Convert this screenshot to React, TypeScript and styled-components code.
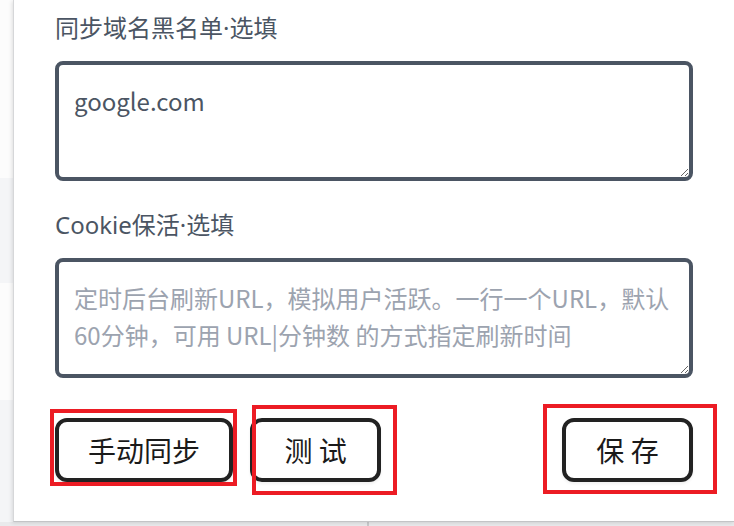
import React from 'react';
import styled, { createGlobalStyle } from 'styled-components';

const GlobalStyle = createGlobalStyle`
  html, body {
    margin: 0;
    padding: 0;
    background: #f5f6f8;
    overflow: hidden;
  }
  body {
    font-family: "Noto Sans", "Noto Sans CJK SC", sans-serif;
  }
`;

const Page = styled.div`
  width: 734px;
  height: 526px;
  display: flex;
  flex-direction: column;
  overflow: hidden;
`;

const Main = styled.div`
  display: flex;
  height: 522px;
`;

const SideStrip = styled.div`
  width: 13px;
  display: flex;
  flex-direction: column;
`;

const StripRow = styled.div<{ $h: number; $shade?: boolean }>`
  height: ${p => p.$h}px;
  flex-shrink: 0;
  background: ${p => (p.$shade ? '#f4f5f7' : '#fcfcfc')};
  &:last-child {
    flex: 1;
  }
`;

const Panel = styled.section`
  flex: 1;
  background: #ffffff;
  border-left: 1px solid #d6d7d9;
  border-bottom: 1px solid #c3c4c6;
  box-shadow: -1px 1px 4px rgba(0, 0, 0, 0.12);
  padding: 10px 41px 0 41px;
  display: flex;
  flex-direction: column;
  position: relative;
  z-index: 1;
`;

const Field = styled.div`
  display: flex;
  flex-direction: column;
  & + & {
    margin-top: 26px;
  }
`;

const Label = styled.label`
  font-size: 24px;
  line-height: 36px;
  color: #4b5563;
  margin-bottom: 15px;
`;

const TextArea = styled.textarea`
  box-sizing: border-box;
  width: 100%;
  height: 120px;
  border: 4px solid #4b5563;
  border-radius: 8px;
  padding: 17px 15px;
  font-family: "Noto Sans CJK SC", "Noto Sans", sans-serif;
  font-size: 24px;
  line-height: 37px;
  color: #4b5563;
  background: #ffffff;
  outline: none;

  &::placeholder {
    color: #9ca3af;
  }
`;

const ButtonRow = styled.div`
  display: flex;
  align-items: center;
  gap: 17px;
  margin-top: 40px;
`;

const Slot = styled.div<{ $push?: boolean }>`
  position: relative;
  margin-left: ${p => (p.$push ? 'auto' : '0')};
`;

const Button = styled.button`
  box-sizing: border-box;
  height: 64px;
  min-width: 131px;
  padding: 0 29px;
  border: 4px solid #222222;
  border-radius: 12px;
  background: #ffffff;
  color: #1a1a1a;
  font-family: "Noto Sans CJK SC", sans-serif;
  font-size: 28px;
  white-space: pre;
  box-shadow: 0 2px 3px rgba(0, 0, 0, 0.06);
  cursor: pointer;
`;

const Marker = styled.span<{ $t: number; $r: number; $b: number; $l: number }>`
  position: absolute;
  top: ${p => p.$t}px;
  right: ${p => p.$r}px;
  bottom: ${p => p.$b}px;
  left: ${p => p.$l}px;
  border: 4px solid #ec1c24;
  pointer-events: none;
`;

const BottomStrip = styled.div`
  flex: 1;
  display: flex;
  background: #e9eaec;
`;

const BottomCell = styled.div<{ $w?: number }>`
  width: ${p => (p.$w ? `${p.$w}px` : 'auto')};
  flex: ${p => (p.$w ? '0 0 auto' : '1')};
  border-right: ${p => (p.$w ? '2px solid #c9cacc' : 'none')};
`;

export default function App() {
  return (
    <Page>
      <GlobalStyle />
      <Main>
        <SideStrip>
          <StripRow $h={178} />
          <StripRow $h={105} $shade />
          <StripRow $h={117} />
          <StripRow $h={122} $shade />
        </SideStrip>
        <Panel>
          <Field>
            <Label>同步域名黑名单·选填</Label>
            <TextArea defaultValue="google.com" />
          </Field>
          <Field>
            <Label>Cookie保活·选填</Label>
            <TextArea
              placeholder={'定时后台刷新URL，模拟用户活跃。一行一个URL，默认\n60分钟，可用 URL|分钟数 的方式指定刷新时间'}
            />
          </Field>
          <ButtonRow>
            <Slot>
              <Button>手动同步</Button>
              <Marker $t={-9} $r={-4} $b={-4} $l={-5} />
            </Slot>
            <Slot>
              <Button>测 试</Button>
              <Marker $t={-13} $r={-16} $b={-13} $l={2} />
            </Slot>
            <Slot $push>
              <Button>保 存</Button>
              <Marker $t={-14} $r={-24} $b={-12} $l={-19} />
            </Slot>
          </ButtonRow>
        </Panel>
      </Main>
      <BottomStrip>
        <BottomCell $w={367} />
        <BottomCell />
      </BottomStrip>
    </Page>
  );
}
